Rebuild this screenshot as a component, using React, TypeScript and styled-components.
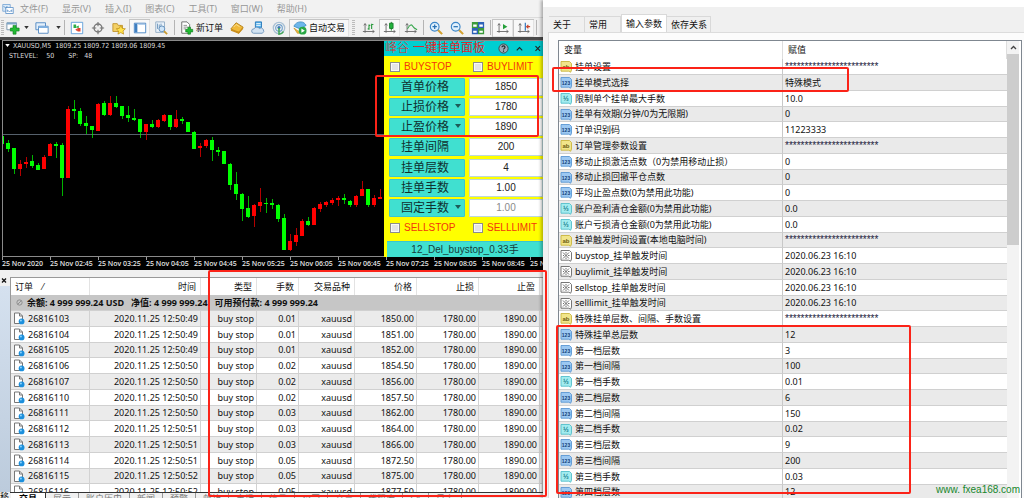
import React from "react";
import styled, { createGlobalStyle, css } from "styled-components";

const ui = `"Noto Sans", "Noto Sans CJK SC", sans-serif`;
const arial = `"Liberation Sans", "Noto Sans CJK SC", sans-serif`;

const GlobalStyle = createGlobalStyle`
  * { box-sizing: border-box; }
  body { margin: 0; background: #f0f0f0; font: 9px/12px ${ui}; color: #111; }
  button, input { font: inherit; color: inherit; margin: 0; padding: 0; border: 0; background: none; border-radius: 0; }
`;

const Page = styled.div`
  position: relative;
  display: grid;
  grid-template-columns: minmax(0, 543fr) minmax(0, 481fr);
  height: 100vh;
  overflow: hidden;
`;

/* ---------- trading terminal ---------- */
const Terminal = styled.main`
  display: flex;
  flex-direction: column;
  min-width: 0;
  min-height: 0;
  overflow: hidden;
`;
const MenuBar = styled.nav`
  display: flex;
  align-items: center;
  gap: 14px;
  height: 17px;
  flex: none;
  padding-left: 2px;
  background: #f2f2f2;
  color: #979797;
  svg { width: 12px; height: 12px; margin-right: -8px; }
  button { white-space: nowrap; }
`;
const ToolBar = styled.div`
  display: flex;
  align-items: center;
  height: 20px;
  flex: none;
  background: #f0f0f0;
  border-top: 1px solid #dcdcdc;
`;
const Tool = styled.button<{ $w?: number; $on?: boolean }>`
  display: flex;
  align-items: center;
  justify-content: center;
  gap: 2px;
  flex: none;
  width: ${(p) => (p.$w ? `${p.$w}px` : "21px")};
  height: 18px;
  white-space: nowrap;
  ${(p) => p.$on && css`background: #f8f8f8; box-shadow: inset 1px 1px #c4c4c4, inset -1px -1px #e2e2e2;`}
  svg { width: 14px; height: 14px; flex: none; }
`;
const Caret = styled.button`
  width: 8px;
  height: 18px;
  flex: none;
  display: grid;
  place-items: center;
  svg { width: 5px; height: 3px; }
`;
const Sep = styled.i<{ $wide?: boolean }>`
  flex: none;
  width: ${(p) => (p.$wide ? 6 : 4)}px;
  height: 15px;
  background: linear-gradient(#b4b4b4, #b4b4b4) center / 1px 100% no-repeat;
`;
const Grip = styled.i<{ $wide?: boolean }>`
  flex: none;
  width: ${(p) => (p.$wide ? 9 : 4)}px;
  height: 15px;
  background: repeating-linear-gradient(#bbb 0 1px, transparent 1px 2px) center / 3px 100% no-repeat;
`;

const ChartWindow = styled.section`
  flex: none;
  display: grid;
  grid-template-columns: minmax(0, 1fr) 159px;
  grid-template-rows: 217px 13px;
  background: #000;
  border-top: 3px solid #4a4a4a;
  color: #dcdcdc;
  overflow: hidden;
`;
const Plot = styled.div`
  position: relative;
  overflow: hidden;
  margin-left: 2px;
  border: 1px solid #8a8a8a;
  border-right: 0;
  > svg { display: block; width: 382px; height: 215px; }
`;
const PlotTitle = styled.div`
  position: absolute;
  top: 0;
  left: 2px;
  font: 7px/10px "DejaVu Sans Condensed", "DejaVu Sans", sans-serif;
  white-space: pre;
  svg { width: 5px; height: 3px; margin: 0 3px 1px 0; }
`;
const Axis = styled.div`
  grid-column: 1 / -1;
  display: flex;
  padding-left: 2px;
  font: 500 7px/10px "Noto Sans", sans-serif;
  overflow: hidden;
  span {
    flex: none;
    width: 48px;
    padding-top: 2px;
    white-space: nowrap;
    color: #eee;
    background: linear-gradient(#999, #999) left top / 1px 3px no-repeat;
  }
`;

const Panel = styled.form`
  display: flex;
  flex-direction: column;
  min-height: 0;
  background: #ff0;
  border-top: 1px solid #8a8a8a;
  font-family: ${arial};
`;
const PanelHead = styled.header`
  display: flex;
  align-items: center;
  height: 15px;
  flex: none;
  padding-left: 1px;
  background: #00ced1;
  color: #e0262c;
  font-size: 12px;
  line-height: 15px;
  svg { width: 11px; height: 11px; }
  button { display: grid; place-items: center; width: 16px; flex: none; color: #222; }
  strong { font-weight: 400; flex: 1; margin-left: 4px; white-space: nowrap; }
  em { font-style: normal; font-weight: 300; }
`;
const Checks = styled.div`
  display: grid;
  grid-template-columns: 83px 1fr;
  align-items: center;
  height: 22px;
  flex: none;
  padding-left: 6px;
  color: #f3350c;
  font-size: 10px;
  label { display: flex; align-items: center; gap: 4px; white-space: nowrap; }
  input {
    appearance: none;
    width: 10px;
    height: 10px;
    border: 1px solid #8c8c8c;
    background: #e4e4e4;
    box-shadow: inset 0 0 0 1px #f8f8f8;
  }
`;
const Rows = styled.div`
  flex: 1;
  display: flex;
  flex-direction: column;
  justify-content: space-between;
  padding-left: 5px;
`;
const FieldRow = styled.div`
  display: grid;
  grid-template-columns: 76px minmax(0, 1fr);
  gap: 4px;
  height: 18px;
`;
const FieldButton = styled.button`
  position: relative;
  background: #40e0d0;
  border: 1px solid #3bc6d0;
  border-radius: 1px;
  color: #10302f;
  font-size: 12px;
  line-height: 16px;
  padding-right: 4px;
  svg { position: absolute; right: 3px; top: 5px; width: 6px; height: 4px; }
`;
const FieldInput = styled.input`
  width: 100%;
  background: #fff;
  border: 1px solid #bcd8dc;
  text-align: center;
  font-size: 10px;
  color: #222;
  &:disabled { color: #8a8a8a; }
`;
const DelButton = styled.button`
  flex: none;
  height: 16px;
  margin: 2px 0 0 3px;
  background: #40e0d0;
  border-top: 1px solid #3bc6d0;
  color: #173c3c;
  font-size: 10px;
  line-height: 14px;
`;

/* ---------- order list ---------- */
const Orders = styled.section`
  flex: 1;
  min-height: 0;
  display: grid;
  grid-template-columns: 10px minmax(0, 1fr);
  grid-template-rows: minmax(0, 1fr) 6px;
  padding-top: 7px;
  background: #f0f0f0;
`;
const Side = styled.div`
  background: linear-gradient(#f0f0f0 9px, #d5e1ef 9px, #bccbdc);
  button { display: block; width: 8px; height: 8px; }
  svg { display: block; width: 8px; height: 8px; }
`;
const OrderWrap = styled.div`
  overflow: hidden;
  background: #fff;
  border-top: 1px solid #999;
  border-left: 1px solid #999;
`;
const OrderTable = styled.table`
  width: 100%;
  table-layout: fixed;
  border-collapse: separate;
  border-spacing: 0;
  line-height: 12px;
  th, td { padding: 0; white-space: nowrap; overflow: hidden; }
  thead th {
    height: 17px;
    padding: 0 4px;
    font-weight: 400;
    text-align: right;
    border-right: 1px solid #e3e3e3;
  }
  thead th:first-child { text-align: left; }
  tbody td {
    height: 16px;
    padding: 0 2px;
    text-align: right;
    border-right: 1px solid #d2d2d2;
    border-bottom: 1px solid #d0d0d0;
  }
  tbody tr:nth-child(4n) td { height: 15px; }
  tbody tr:nth-child(even) td { background: #ebebeb; }
  tbody td:first-child { text-align: left; }
  tbody tr:first-child td {
    padding-left: 5px;
    text-align: left;
    background: #c6c6c6;
    font-weight: 700;
    white-space: pre;
    border-right: 0;
  }
`;
const WithIcon = styled.span`
  display: flex;
  align-items: center;
  gap: 3px;
  svg { flex: none; width: 12px; height: 13px; }
`;
const Balance = styled(WithIcon)`
  gap: 4px;
  svg { width: 7px; height: 7px; }
`;
const SideTab = styled.div`
  overflow: hidden;
  line-height: 9px;
`;
const BottomTabs = styled.div`
  display: flex;
  overflow: hidden;
  border-top: 1px solid #333;
  background: #f0f0f0;
  color: #777;
  button {
    flex: none;
    height: 12px;
    padding: 0 7px;
    border-right: 1px solid #999;
    line-height: 12px;
  }
  button:first-child { padding: 0 8px; margin-left: 1px; background: #fff; color: #000; font-weight: 700; border-color: #333; }
`;

/* ---------- input dialog ---------- */
const Dialog = styled.aside`
  display: flex;
  flex-direction: column;
  min-width: 0;
  min-height: 0;
  overflow: hidden;
  background: #f0f0f0;
  border-top: 7px solid #fff;
  box-shadow: -2px 0 3px rgba(0, 0, 0, 0.3);
  z-index: 1;
`;
const TabList = styled.div`
  display: flex;
  align-items: flex-end;
  height: 25px;
  flex: none;
  padding-left: 6px;
`;
const Tab = styled.button<{ $on?: boolean }>`
  height: ${(p) => (p.$on ? 18 : 16)}px;
  padding: 0 ${(p) => (p.$on ? 4 : 3)}px 0 4px;
  min-width: 36px;
  text-align: left;
  white-space: nowrap;
  background: ${(p) => (p.$on ? "#fff" : "#f0f0f0")};
  border: 1px solid #d9d9d9;
  border-bottom: 0;
  border-left-width: ${(p) => (p.$on ? 1 : 0)}px;
`;
const DialogBody = styled.div`
  flex: 1;
  min-height: 0;
  display: flex;
  margin-left: 5px;
  padding: 7px 2px 0 9px;
  border-top: 1px solid #dcdcdc;
  border-left: 1px solid #dcdcdc;
  background: #fcfcfc;
`;
const ListBox = styled.div`
  flex: 1;
  min-width: 0;
  display: flex;
  overflow: hidden;
  background: #fff;
  border: 1px solid #7f8790;
  border-bottom: 0;
`;
const ParamTable = styled.table`
  flex: 1;
  min-width: 0;
  align-self: flex-start;
  table-layout: fixed;
  border-spacing: 0;
  th, td { padding: 0 0 0 2px; text-align: left; white-space: nowrap; overflow: hidden; font-weight: 400; }
  thead th { height: 18px; padding-left: 5px; border-right: 1px solid #dedede; }
  tbody td { height: 16px; border-bottom: 1px solid #d0d0d0; }
  tbody td:first-child { border-right: 1px solid #c8c8c8; padding-left: 1px; }
  tbody tr:nth-child(4n) td { height: 15px; }
  tbody tr:nth-child(even) td { background: #eaeaea; }
`;
const Stars = styled.span`
  display: block;
  font: 10px/12px ${arial};
  color: #1c1c3c;
`;
const ScrollBar = styled.div`
  flex: none;
  width: 12px;
  margin-right: 2px;
  background: #f3f3f3;
  button { display: grid; place-items: center; width: 12px; height: 13px; }
  svg { width: 7px; height: 5px; }
  div { height: 191px; background: #cdcdcd; }
`;

/* ---------- marker boxes and site mark over the page ---------- */
const Mark = styled.div<{ $x: number; $y: number; $w: number; $h: number }>`
  position: absolute;
  z-index: 2;
  pointer-events: none;
  left: ${(p) => p.$x}px;
  top: ${(p) => p.$y}px;
  width: ${(p) => p.$w}px;
  height: ${(p) => p.$h}px;
  border: 2px solid #fb2318;
  border-radius: 2px;
`;
const SiteMark = styled.a`
  position: absolute;
  z-index: 2;
  right: 4px;
  bottom: 2px;
  color: #17862c;
  font: 10px/12px ${arial};
  text-decoration: none;
  white-space: pre;
`;

/* candle: [high, body top, body bottom, low, rising] in chart units */
type Candle = [number, number, number, number, 0 | 1];
const candles: Candle[] = [
  [267, 303, 327, 330, 0], [314, 323, 342, 352, 0], [338, 340, 403, 416, 0], [375, 386, 403, 423, 1],
  [367, 381, 387, 400, 1], [361, 378, 392, 399, 0], [384, 390, 404, 406, 0], [360, 366, 403, 403, 1],
  [325, 327, 364, 364, 1], [321, 327, 333, 368, 0], [323, 330, 428, 484, 0], [212, 222, 428, 430, 1],
  [195, 222, 228, 252, 0], [218, 228, 266, 273, 0], [243, 264, 274, 296, 0], [274, 274, 285, 308, 0],
  [204, 206, 287, 287, 1], [198, 205, 240, 243, 0], [183, 203, 240, 243, 1], [184, 204, 216, 219, 0],
  [214, 214, 243, 252, 0], [212, 240, 249, 260, 0], [222, 248, 255, 258, 0], [252, 252, 292, 308, 0],
  [268, 268, 292, 314, 1], [254, 268, 276, 280, 0], [252, 255, 277, 279, 1], [237, 239, 257, 261, 1],
  [239, 240, 275, 285, 0], [226, 251, 277, 280, 1], [246, 251, 259, 266, 0], [260, 260, 290, 292, 0],
  [288, 290, 341, 342, 0], [323, 333, 340, 367, 1], [313, 316, 333, 338, 1], [305, 316, 346, 377, 0],
  [336, 346, 351, 363, 0], [349, 349, 386, 388, 0], [384, 386, 449, 466, 0], [411, 448, 478, 495, 0],
  [475, 478, 521, 557, 0], [483, 520, 545, 548, 0], [507, 509, 542, 576, 1], [460, 502, 513, 532, 1],
  [490, 503, 507, 533, 0], [492, 505, 511, 522, 0], [508, 509, 551, 562, 0], [537, 549, 646, 646, 0],
  [598, 619, 645, 647, 1], [580, 601, 621, 632, 1], [553, 558, 603, 604, 1], [546, 558, 570, 572, 0],
  [516, 519, 569, 570, 1], [501, 507, 521, 531, 1], [498, 502, 509, 516, 1], [489, 495, 503, 510, 1],
  [483, 489, 496, 514, 1], [477, 489, 495, 508, 0], [495, 497, 511, 515, 0], [480, 483, 511, 515, 1],
  [439, 462, 483, 484, 1], [462, 463, 509, 515, 0], [480, 489, 509, 515, 1], [462, 485, 491, 493, 1],
];

const times = ["25 Nov 2020", "25 Nov 02:45", "25 Nov 03:25", "25 Nov 04:05", "25 Nov 04:45", "25 Nov 05:25",
  "25 Nov 06:05", "25 Nov 06:45", "25 Nov 07:25", "25 Nov 08:05", "25 Nov 08:45", "25 Nov 09:25"];

const fields: [string, string, boolean?, boolean?][] = [
  ["首单价格", "1850"], ["止损价格", "1780", true], ["止盈价格", "1890", true], ["挂单间隔", "200"],
  ["挂单层数", "4"], ["挂单手数", "1.00"], ["固定手数", "1.00", true, true],
];

const orders = [
  ["26816103", "49", "0.01", "1850.00"], ["26816104", "49", "0.01", "1851.00"], ["26816105", "49", "0.01", "1852.00"],
  ["26816106", "50", "0.02", "1854.50"], ["26816107", "50", "0.02", "1856.00"], ["26816110", "50", "0.02", "1857.50"],
  ["26816111", "50", "0.03", "1862.00"], ["26816112", "51", "0.03", "1864.00"], ["26816113", "51", "0.03", "1866.00"],
  ["26816114", "51", "0.05", "1872.50"], ["26816115", "52", "0.05", "1875.00"], ["26816116", "52", "0.05", "1877.50"],
];

type Kind = "ab" | "123" | "½" | "date";
const stars = "************************";
const params: [Kind, string, string][] = [
  ["ab", "挂单设置", stars],
  ["123", "挂单模式选择", "特殊模式"],
  ["½", "限制单个挂单最大手数", "10.0"],
  ["123", "挂单有效期(分钟/0为无限期)", "0"],
  ["123", "订单识别码", "11223333"],
  ["ab", "订单管理参数设置", stars],
  ["123", "移动止损激活点数（0为禁用移动止损）", "0"],
  ["123", "移动止损回撤平仓点数", "0"],
  ["123", "平均止盈点数(0为禁用此功能)", "0"],
  ["½", "账户盈利清仓金额(0为禁用此功能)", "0.0"],
  ["½", "账户亏损清仓金额(0为禁用此功能)", "0.0"],
  ["ab", "挂单触发时间设置(本地电脑时间)", stars],
  ["date", "buystop_挂单触发时间", "2020.06.23 16:10"],
  ["date", "buylimit_挂单触发时间", "2020.06.23 16:10"],
  ["date", "sellstop_挂单触发时间", "2020.06.23 16:10"],
  ["date", "selllimit_挂单触发时间", "2020.06.23 16:10"],
  ["ab", "特殊挂单层数、间隔、手数设置", stars],
  ["123", "特殊挂单总层数", "12"],
  ["123", "第一档层数", "3"],
  ["123", "第一档间隔", "100"],
  ["½", "第一档手数", "0.01"],
  ["123", "第二档层数", "6"],
  ["123", "第二档间隔", "150"],
  ["½", "第二档手数", "0.02"],
  ["123", "第三档层数", "9"],
  ["123", "第三档间隔", "200"],
  ["½", "第三档手数", "0.03"],
  ["123", "第四档层数", "12"],
];

const kindColors: Record<Kind, [string, string, string]> = {
  ab: ["#f1e58a", "#c9b63e", "#6b5c10"],
  "123": ["#9cc8f2", "#5b97d3", "#123f78"],
  "½": ["#a2ecf0", "#55c0cb", "#147a88"],
  date: ["#ffffff", "#666666", "#333333"],
};

function KindIcon({ kind }: { kind: Kind }) {
  const [fill, line, ink] = kindColors[kind];
  return (
    <svg viewBox="0 0 12 13">
      <path d="M1 1.5h8.5l2 2v6.5l-.8 2.2-2-1H1z" fill={fill} stroke={line} strokeWidth=".9" />
      {kind === "date" ? (
        <path d="M3 3.5l6 6M9 3.5l-6 6M6 3v1.500M3 6.500h1M8 6.500h1.500M6 8.500V10" stroke={ink} strokeWidth=".7" fill="none" />
      ) : (
        <text x="6" y="8.8" textAnchor="middle" fontFamily="Liberation Sans" fontWeight="700"
          fontSize={kind === "123" ? 5 : kind === "ab" ? 6 : 7} fill={ink}>{kind}</text>
      )}
    </svg>
  );
}

const OrderIcon = () => (
  <svg viewBox="0 0 12 13">
    <path d="M1.500 1h5l3 3v7.500h-8z" fill="#fff" stroke="#777" />
    <path d="M6.500 1v3h3" fill="none" stroke="#777" />
    <circle cx="8.600" cy="9.400" r="2.900" fill="#1c8fdc" />
    <circle cx="7.900" cy="8.600" r="1" fill="#8fd2f8" />
  </svg>
);

const Down = ({ fill = "#333" }: { fill?: string }) => (
  <svg viewBox="0 0 6 4"><path d="M0 0h6L3 4z" fill={fill} /></svg>
);
const plus = <path d="M9 7h3v2.500h2.500v3H12V15H9v-2.500H6.500v-3H9z" fill="#22bb33" stroke="#0d7a1c" strokeWidth=".7" />;
const axes = <path d="M3.500 3v10.500M1 12h13M2 5l1.500-2L5 5M12 10.500l2 1.500-2 1.500" fill="none" stroke="#666" />;

const icons: Record<string, React.ReactNode> = {
  logo: <><path d="M1 2h10v9H1z" fill="#dcebf8" stroke="#6c9fd2" /><path d="M5 6h10v8H5z" fill="#fff" stroke="#4f88c4" /><path d="M2 4l3 3 2-3M7 12V9l3 3 3-3v3" fill="none" stroke="#4f88c4" /></>,
  add: <><path d="M1 2h11v8H1z" fill="#fff" stroke="#6e8ea8" /><path d="M1 2h11v2H1z" fill="#7fa6c8" /><path d="M8 5h3.500v3H15v3.500h-3.500V15H8v-3.500H5V8h3z" fill="#22bb33" stroke="#0d7a1c" strokeWidth=".7" /></>,
  windows: <><path d="M1 2h11v8H1z" fill="#e4f0fb" stroke="#4a84c0" /><path d="M4 6h11v8H4z" fill="#fff" stroke="#4a84c0" /><path d="M4 6h11v2H4z" fill="#7fb0e0" /></>,
  market: <><path d="M1.500 1.500h13v13h-13z" fill="#fff" stroke="#5a9bd8" /><path d="M4 4h3v4H4z" fill="#2cad45" /><path d="M6 7l4-2v3z" fill="#2cad45" /><path d="M9 8h3v4H9z" fill="#e0432f" /><path d="M6 10l3-2v4z" fill="#e0432f" /></>,
  cross: <><circle cx="8" cy="8" r="4.500" fill="none" stroke="#777" strokeWidth="1.600" /><path d="M8 1v5M8 10v5M1 8h5M10 8h5" stroke="#777" strokeWidth="1.300" /></>,
  folder: <><path d="M1 3h5l1 2h5v7H1z" fill="#f3d066" stroke="#c0932a" /><path d="M10 5l1.700 3.400 3.600.5-2.700 2.500.7 3.600-3.300-1.800L6.800 15l.7-3.600L4.900 8.900l3.500-.5z" fill="#ffe24a" stroke="#b98a14" strokeWidth=".8" /></>,
  nav: <><path d="M1.500 2.500h13v11h-13z" fill="#fff" stroke="#3f7fc0" /><path d="M2 3h3v10H2z" fill="#3f7fc0" /><path d="M6 4h8" stroke="#a9c8e8" /></>,
  tester: <><path d="M2 1h10v12H2z" fill="#eaf2fa" stroke="#8fa9c2" /><path d="M4 3v6M6 4v6M8 3v4" stroke="#6c93ba" /><circle cx="9" cy="9" r="3.300" fill="#cfe5f8" stroke="#5c8ab8" /><path d="M11.500 11.500L15 15" stroke="#c99a2e" strokeWidth="2" /></>,
  order: <><path d="M2 1h6l3 3v10H2z" fill="#fff" stroke="#666" /><path d="M4 5h4M4 7h5M4 9h3" stroke="#888" />{plus}</>,
  gold: <><path d="M1 9l6-7 8 5-5 7z" fill="#f0b93a" stroke="#b07c14" /><path d="M1 9l9 3 5-5v2l-5 5.500L1 11z" fill="#c98e1c" /><path d="M4 7l3-3 4 2.500" stroke="#ffe59a" fill="none" /></>,
  cloud: <><path d="M5 1h7v7H5z" fill="#58b2ec" stroke="#2377b8" /><path d="M6 3h5M6 5h5" stroke="#fff" /><path d="M3 14a2.500 2.500 0 0 1 .5-5 3.500 3.500 0 0 1 6-.5A3 3 0 0 1 13 14z" fill="#d3e3f2" stroke="#6b92ba" /></>,
  signal: <><circle cx="8" cy="8" r="6.500" fill="none" stroke="#a9c0d4" strokeWidth="1.500" /><circle cx="8" cy="8" r="3.800" fill="none" stroke="#6fa0cc" strokeWidth="1.300" /><circle cx="8" cy="7.500" r="1.800" fill="#3a78b8" /><path d="M8 8v7c3 0 4-1 5-3" stroke="#42a758" strokeWidth="1.800" fill="none" /></>,
  auto: <><path d="M1 8l7 5 6-5-2 6H5z" fill="#e9b73e" stroke="#b88a1c" strokeWidth=".7" /><path d="M1 6c2-4 5-5 8-5s5 2 6 4l-7 4z" fill="#6db7ea" stroke="#2d7fbc" strokeWidth=".8" /><circle cx="11" cy="11" r="4.500" fill="#28a745" /><path d="M9.600 8.600v4.800l4-2.400z" fill="#fff" /></>,
  bars: <>{axes}<path d="M8 4v6M8 9H6.500M11 3v6M11 4h2M8 5h1.500" stroke="#2c9b3f" fill="none" strokeWidth="1.300" /></>,
  candle: <>{axes}<path d="M9.500 1v10" stroke="#167a28" /><path d="M7.500 2.500h4v6h-4z" fill="#22b33c" stroke="#167a28" /></>,
  line: <>{axes}<path d="M4 9c3-6 5-5 6-3s3 3 5 4" stroke="#35a54b" fill="none" strokeWidth="1.200" /></>,
  zoomIn: <><path d="M10 10l5 5" stroke="#d2a12f" strokeWidth="2.400" /><circle cx="6.500" cy="6.500" r="5" fill="#e0f0fc" stroke="#3c86c8" strokeWidth="1.300" /><path d="M4 6.500h5M6.500 4v5" stroke="#2670b4" strokeWidth="1.400" /></>,
  zoomOut: <><path d="M10 10l5 5" stroke="#d2a12f" strokeWidth="2.400" /><circle cx="6.500" cy="6.500" r="5" fill="#e0f0fc" stroke="#3c86c8" strokeWidth="1.300" /><path d="M4 6.500h5" stroke="#2670b4" strokeWidth="1.400" /></>,
  tiles: <><path d="M1 1h7v7H1zM8 8h7v7H8z" fill="#3b9a3b" /><path d="M8 1h7v7H8zM1 8h7v7H1z" fill="#2d62b8" /><path d="M2.500 4h4v2.500h-4zM9.500 4h4v2.500h-4zM2.500 11h4v2.500h-4zM9.500 11h4v2.500h-4z" fill="#fff" /></>,
  scroll: <>{axes}<path d="M8 3.500v6l5-3z" fill="#25a03a" /></>,
  shift: <>{axes}<path d="M9.500 2v9" stroke="#2a70b8" strokeWidth="1.300" /><path d="M15 6.500h-4M13 4.500l-2 2 2 2" stroke="#c8452c" fill="none" strokeWidth="1.300" /></>,
};
const Icon = ({ name }: { name: string }) => <svg viewBox="0 0 16 16" aria-hidden="true">{icons[name]}</svg>;

function Toolbar() {
  const tool = (name: string, on = false) => <Tool type="button" aria-label={name} $on={on}><Icon name={name} /></Tool>;
  return (
    <ToolBar>
      <Grip />
      <Tool type="button" aria-label="add" $w={18}><Icon name="add" /></Tool>
      <Caret type="button" aria-label="add menu"><Down /></Caret>
      <Tool type="button" aria-label="windows" $w={24}><Icon name="windows" /></Tool>
      <Caret type="button" aria-label="windows menu"><Down /></Caret>
      <Sep />
      {tool("market")}{tool("cross")}{tool("folder")}{tool("nav", true)}{tool("tester")}
      <Sep $wide />
      <Tool type="button" $w={49}><Icon name="order" />新订单</Tool>
      {tool("gold")}{tool("cloud")}{tool("signal")}
      <Tool type="button" $w={60} $on><Icon name="auto" />自动交易</Tool>
      <Grip $wide />
      {tool("bars")}{tool("candle", true)}{tool("line")}
      <Sep />
      {tool("zoomIn")}{tool("zoomOut")}{tool("tiles")}
      <Sep />
      {tool("scroll", true)}{tool("shift", true)}
      <Sep />
    </ToolBar>
  );
}

function TradePanel() {
  return (
    <Panel onSubmit={(e) => e.preventDefault()}>
      <PanelHead>
        <em>峰谷</em>
        <strong>一键挂单面板</strong>
        <button type="button" aria-label="help">
          <svg viewBox="0 0 12 12"><circle cx="6" cy="6" r="5" fill="#9ab" stroke="#444" /><path d="M4.300 4.600C4.300 2.600 7.700 2.600 7.700 4.600 7.700 5.900 6 5.800 6 7.200M6 8.300v1.200" fill="none" stroke="#222" strokeWidth="1.200" /></svg>
        </button>
        <button type="button" aria-label="collapse">
          <svg viewBox="0 0 12 12"><path d="M3 8l3-3 3 3" fill="none" stroke="#222" strokeWidth="1.200" /></svg>
        </button>
        <button type="button" aria-label="close panel">
          <svg viewBox="0 0 12 12"><path d="M6 3.500l5 5M11 3.500l-5 5" stroke="#222" strokeWidth="1.200" /></svg>
        </button>
      </PanelHead>
      <Checks>
        <label><input type="checkbox" />BUYSTOP</label>
        <label><input type="checkbox" />BUYLIMIT</label>
      </Checks>
      <Rows>
        {fields.map(([label, value, menu, off]) => (
          <FieldRow key={label}>
            <FieldButton type="button">{label}{menu && <Down fill="#1d5c58" />}</FieldButton>
            <FieldInput aria-label={label} defaultValue={value} disabled={off} />
          </FieldRow>
        ))}
      </Rows>
      <Checks>
        <label><input type="checkbox" />SELLSTOP</label>
        <label><input type="checkbox" />SELLLIMIT</label>
      </Checks>
      <DelButton type="button">12_Del_buystop_0.33手</DelButton>
    </Panel>
  );
}

export default function App() {
  return (
    <Page>
      <GlobalStyle />
      <Terminal>
        <MenuBar>
          <Icon name="logo" />
          {["文件(F)", "显示(V)", "插入(I)", "图表(C)", "工具(T)", "窗口(W)", "帮助(H)"].map((m) => (
            <button type="button" key={m}>{m}</button>
          ))}
        </MenuBar>
        <Toolbar />
        <ChartWindow>
          <Plot>
            <svg viewBox="9 18 1146 645" shapeRendering="crispEdges">
              <path d="M0 297H1155" stroke="#56616c" strokeWidth="3" />
              {candles.map(([high, top, bottom, low, up], i) => {
                const x = 7 + i * 18;
                const fill = up ? "#ff0000" : "#00ff00";
                return (
                  <g key={i} fill={fill}>
                    <rect x={x - 1} y={high} width="3" height={low - high} opacity=".7" />
                    <rect x={x - 6} y={top} width="12" height={Math.max(3, bottom - top)} />
                  </g>
                );
              })}
            </svg>
            <PlotTitle>
              <Down fill="#fff" />{"XAUUSD,M5  1809.25 1809.72 1809.06 1809.45\n  STLEVEL:    50       SP:   48"}
            </PlotTitle>
          </Plot>
          <TradePanel />
          <Axis>{times.map((t) => <span key={t}>{t}</span>)}</Axis>
        </ChartWindow>
        <Orders>
          <Side>
            <button type="button" aria-label="close list">
              <svg viewBox="0 0 8 8"><path d="M2 1.500l4 4M6 1.500l-4 4" stroke="#111" strokeWidth="1.300" /></svg>
            </button>
          </Side>
          <OrderWrap>
            <OrderTable>
              <colgroup>
                <col style={{ width: 79 }} /><col style={{ width: 111 }} /><col style={{ width: 56 }} /><col style={{ width: 42 }} />
                <col style={{ width: 56 }} /><col style={{ width: 62 }} /><col style={{ width: 62 }} /><col style={{ width: 61 }} /><col />
              </colgroup>
              <thead>
                <tr>
                  <th>订单 &nbsp;&nbsp; ⁄</th><th>时间</th><th>类型</th><th>手数</th><th>交易品种</th>
                  <th>价格</th><th>止损</th><th>止盈</th><th aria-label="more" />
                </tr>
              </thead>
              <tbody>
                <tr>
                  <td colSpan={9}>
                    <Balance>
                      <svg viewBox="0 0 8 8"><circle cx="4" cy="4" r="3" fill="none" stroke="#888" /><path d="M2 6l4-4" stroke="#888" /></svg>
                      余额: 4 999 999.24 USD   净值: 4 999 999.24   可用预付款: 4 999 999.24
                    </Balance>
                  </td>
                </tr>
                {orders.map(([id, sec, lots, price]) => (
                  <tr key={id}>
                    <td><WithIcon><OrderIcon />{id}</WithIcon></td>
                    <td>2020.11.25 12:50:{sec}</td>
                    <td>buy stop</td><td>{lots}</td><td>xauusd</td><td>{price}</td>
                    <td>1780.00</td><td>1890.00</td><td />
                  </tr>
                ))}
              </tbody>
            </OrderTable>
          </OrderWrap>
          <SideTab>移</SideTab>
          <BottomTabs>
            {["交易", "展示", "账户历史", "新闻", "预警", "邮箱", "市场", "信号", "公司", "文章", "代码库", "EA", "日志"].map((t) => (
              <button type="button" key={t}>{t}</button>
            ))}
          </BottomTabs>
        </Orders>
      </Terminal>

      <Dialog>
        <TabList>
          <Tab type="button">关于</Tab><Tab type="button">常用</Tab>
          <Tab type="button" $on>输入参数</Tab><Tab type="button">依存关系</Tab>
        </TabList>
        <DialogBody>
          <ListBox>
            <ParamTable>
              <colgroup><col style={{ width: "50%" }} /><col style={{ width: "50%" }} /></colgroup>
              <thead><tr><th>变量</th><th>赋值</th></tr></thead>
              <tbody>
                {params.map(([kind, name, value]) => (
                  <tr key={name}>
                    <td><WithIcon><KindIcon kind={kind} />{name}</WithIcon></td>
                    <td>{value === stars ? <Stars>{value}</Stars> : value}</td>
                  </tr>
                ))}
              </tbody>
            </ParamTable>
            <ScrollBar>
              <button type="button" aria-label="scroll up">
                <svg viewBox="0 0 7 5"><path d="M1 4l2.500-2.500L6 4" fill="none" stroke="#444" strokeWidth="1.300" /></svg>
              </button>
              <div />
            </ScrollBar>
          </ListBox>
        </DialogBody>
      </Dialog>

      <Mark $x={375} $y={75} $w={164} $h={62} />
      <Mark $x={208} $y={270} $w={339} $h={227} />
      <Mark $x={552} $y={67} $w={297} $h={25} />
      <Mark $x={556} $y={325} $w={355} $h={169} />
      <SiteMark href="#">www. fxea168.com</SiteMark>
    </Page>
  );
}
